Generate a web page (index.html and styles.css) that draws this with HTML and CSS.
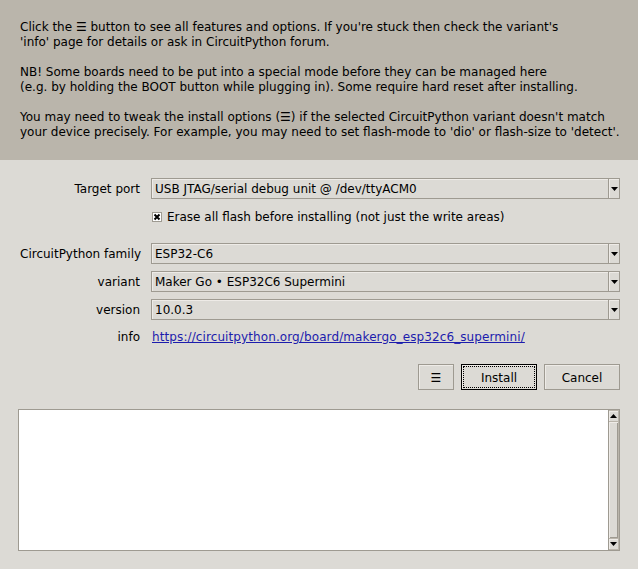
FILE: index.html
```html
<!DOCTYPE html>
<html lang="en">
<head>
<meta charset="utf-8">
<title>Install CircuitPython</title>
<link rel="stylesheet" href="styles.css">
</head>
<body>
<div class="dialog">
  <div class="intro">
    <p>Click the ☰ button to see all features and options. If you're stuck then check the variant's<br>'info' page for details or ask in CircuitPython forum.</p>
    <p>NB! Some boards need to be put into a special mode before they can be managed here<br>(e.g. by holding the BOOT button while plugging in). Some require hard reset after installing.</p>
    <p>You may need to tweak the install options (☰) if the selected CircuitPython variant doesn't match<br>your device precisely. For example, you may need to set flash-mode to 'dio' or flash-size to 'detect'.</p>
  </div>

  <div class="form">
    <span class="field-label">Target port</span>
    <div class="combo">
      <span class="combo-value">USB JTAG/serial debug unit @ /dev/ttyACM0</span>
      <span class="combo-arrow"><svg width="7" height="4" viewBox="0 0 7 4"><path d="M0 0H7L3.5 4Z" fill="#000"/></svg></span>
    </div>

    <div class="check-row">
      <svg class="check-box" width="10" height="10" viewBox="0 0 10 10">
        <rect x="0.5" y="0.5" width="9" height="9" fill="#fff" stroke="#9e9a91"/>
        <path d="M2.5 2.5L7.5 7.5M7.5 2.5L2.5 7.5" stroke="#000" stroke-width="2"/>
      </svg>
      <span>Erase all flash before installing (not just the write areas)</span>
    </div>

    <div class="spacer"></div>

    <span class="field-label">CircuitPython family</span>
    <div class="combo">
      <span class="combo-value">ESP32-C6</span>
      <span class="combo-arrow"><svg width="7" height="4" viewBox="0 0 7 4"><path d="M0 0H7L3.5 4Z" fill="#000"/></svg></span>
    </div>

    <span class="field-label">variant</span>
    <div class="combo">
      <span class="combo-value">Maker Go • ESP32C6 Supermini</span>
      <span class="combo-arrow"><svg width="7" height="4" viewBox="0 0 7 4"><path d="M0 0H7L3.5 4Z" fill="#000"/></svg></span>
    </div>

    <span class="field-label">version</span>
    <div class="combo">
      <span class="combo-value">10.0.3</span>
      <span class="combo-arrow"><svg width="7" height="4" viewBox="0 0 7 4"><path d="M0 0H7L3.5 4Z" fill="#000"/></svg></span>
    </div>

    <span class="field-label info-cell">info</span>
    <div class="info-cell"><a class="link" href="#">https://circuitpython.org/board/makergo_esp32c6_supermini/</a></div>
  </div>

  <div class="actions">
    <button class="btn btn-menu" type="button">☰</button>
    <button class="btn btn-default" type="button">Install</button>
    <button class="btn btn-cancel" type="button">Cancel</button>
  </div>

  <div class="log">
    <div class="log-text"></div>
    <div class="scrollbar">
      <div class="sb-btn"><svg width="7" height="4" viewBox="0 0 7 4"><path d="M0 4H7L3.5 0Z" fill="#000"/></svg></div>
      <div class="sb-thumb"></div>
      <div class="sb-btn"><svg width="7" height="4" viewBox="0 0 7 4"><path d="M0 0H7L3.5 4Z" fill="#000"/></svg></div>
    </div>
  </div>
</div>
</body>
</html>
```

FILE: styles.css
```css
html, body {
  margin: 0;
  padding: 0;
}

body {
  background: #dcdad5;
  color: #000;
  font-family: "DejaVu Sans", "Noto Sans", sans-serif;
  font-size: 12px;
  line-height: 15px;
}

.dialog {
  width: 638px;
  height: 569px;
  display: flex;
  flex-direction: column;
  overflow: hidden;
}

/* top help text */
.intro {
  background: #bab5ab;
  padding: 20px 20px;
  display: flex;
  flex-direction: column;
  gap: 15px;
}

.intro p {
  margin: 0;
  white-space: nowrap;
}

/* labelled fields */
.form {
  display: grid;
  grid-template-columns: 120px 1fr;
  column-gap: 11px;
  row-gap: 7px;
  align-items: center;
  padding: 18px 18px 0 20px;
}

.field-label {
  text-align: right;
  white-space: nowrap;
  padding-top: 1px;
}

.combo {
  height: 21px;
  box-sizing: border-box;
  border: 1px solid #9e9a91;
  background: #dcdad5;
  box-shadow: inset 1px 1px 0 #eeebe7;
  display: flex;
  align-items: center;
}

.combo-value {
  flex: 1;
  padding: 1px 0 0 3px;
  white-space: nowrap;
  overflow: hidden;
}

.combo-arrow {
  width: 10px;
  align-self: stretch;
  border-left: 1px solid #9e9a91;
  box-shadow: inset 1px 1px 0 #eeebe7;
  display: flex;
  align-items: center;
  justify-content: center;
}

.combo-arrow svg {
  display: block;
}

.check-row {
  grid-column: 2;
  height: 19px;
  margin-top: 1px;
  display: flex;
  align-items: center;
  gap: 5px;
  padding-left: 1px;
}

.check-row span {
  padding-top: 1px;
}

.check-box {
  display: block;
  flex: none;
}

.spacer {
  grid-column: 1 / -1;
  height: 3px;
}

.info-cell {
  height: 19px;
  display: flex;
  align-items: center;
}

.field-label.info-cell {
  justify-content: flex-end;
  padding-top: 2px;
  box-sizing: border-box;
}

div.info-cell {
  padding-left: 1px;
  padding-top: 2px;
  box-sizing: border-box;
}

.link {
  color: #1c1cad;
  text-decoration: underline;
  letter-spacing: 0.1px;
}

/* dialog buttons */
.actions {
  display: flex;
  justify-content: flex-end;
  gap: 7px;
  padding: 0 18px 0 0;
  margin-top: 18px;
}

.btn {
  position: relative;
  height: 26px;
  box-sizing: border-box;
  margin: 0;
  padding: 2px 0 0 0;
  border: 1px solid #9e9a91;
  background: #dcdad5;
  box-shadow: inset 1px 1px 0 #eeebe7;
  font: inherit;
  color: #000;
  text-align: center;
}

.btn-menu {
  width: 36px;
}

.btn-default,
.btn-cancel {
  width: 76px;
}

.btn-default {
  border-color: #000;
}

/* keyboard focus ring */
.btn-default::after {
  content: "";
  position: absolute;
  inset: 1px;
  border: 1px dotted #000;
}

/* output log with scrollbar */
.log {
  margin: 19px 18px 0 18px;
  height: 142px;
  display: flex;
  border: 1px solid #9e9a91;
  border-right: none;
  box-sizing: border-box;
}

.log-text {
  flex: 1;
  background: #fff;
}

.scrollbar {
  width: 12px;
  box-sizing: border-box;
  background: #bab5ab;
  border-left: 1px solid #9e9a91;
  border-right: 1px solid #9e9a91;
  padding: 1px 1px 1px 0;
  display: flex;
  flex-direction: column;
  gap: 1px;
}

.sb-btn {
  height: 10px;
  background: #dcdad5;
  box-shadow: inset 1px 1px 0 #eeebe7;
  display: flex;
  align-items: center;
  justify-content: center;
}

.sb-btn svg {
  display: block;
}

.sb-thumb {
  flex: 1;
  background: #dcdad5;
  box-shadow: inset 1px 1px 0 #eeebe7, inset -1px -1px 0 #9e9a91;
}
```
